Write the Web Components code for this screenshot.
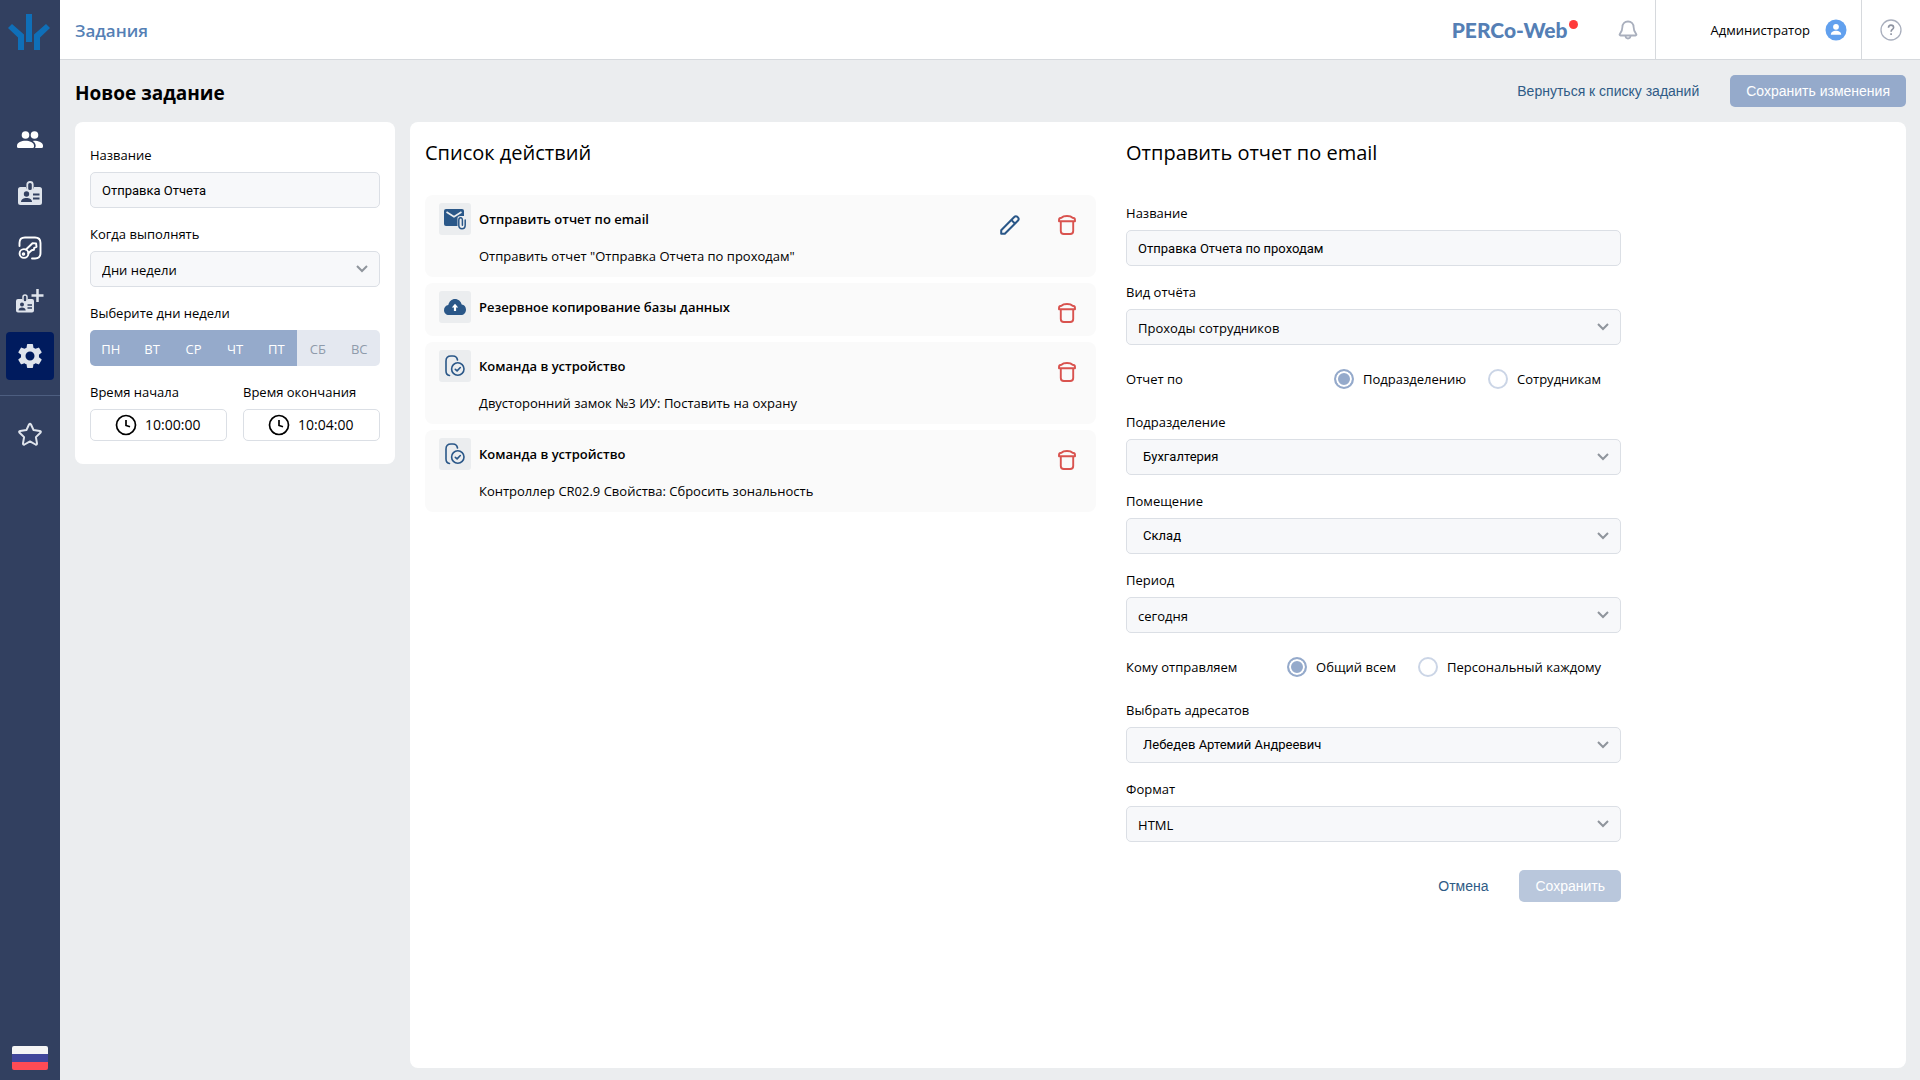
<!DOCTYPE html>
<html lang="ru">
<head>
<meta charset="UTF-8">
<title>Задания</title>
<style>
  html, body { height: 100%; }
  body {
    margin: 0;
    background: #ebedef;
    color: #000;
    font: 13px/20px "Open Sans", "Noto Sans", sans-serif;
  }
</style>
</head>
<body>
<task-app></task-app>

<script>
  const ICONS = {
    // sidebar
    logo: '<svg width="42" height="38" viewBox="0 0 42 38" fill="#0f6fb8"><path d="M18 0h6v28h-6z"/><path d="M0 14l4-4 12 10.500V36h-6V23.500zM42 14l-4-4-12 10.500V36h6V23.500z"/></svg>',
    people: '<svg width="26" height="18" viewBox="0 0 26 18" fill="#fff"><circle cx="8.500" cy="4" r="3.800"/><circle cx="17.500" cy="4" r="3.800"/><path d="M0 14.500C0 11.500 4.500 9.800 8.500 9.800s8.500 1.700 8.500 4.700v1q0 1.500-1.500 1.500h-14Q0 17 0 15.500z"/><path d="M17 9.800c4.500 0 9 1.700 9 4.700v1q0 1.500-1.500 1.500H18q.7-.8.700-2c0-2-.9-4-3-5.100z"/></svg>',
    badge: '<svg width="24" height="26" viewBox="0 0 24 26"><path fill="#dfe4ec" d="M2.500 6H8v1.500h8V6h5.500Q24 6 24 8.500v13q0 2.500-2.500 2.500h-19Q0 24 0 21.500v-13Q0 6 2.500 6z"/><rect x="9.300" y="1" width="5.400" height="9" rx="2.500" fill="#324060" stroke="#dfe4ec" stroke-width="1.800"/><circle cx="8.500" cy="13" r="2.700" fill="#324060"/><path fill="#324060" d="M3 21c0-2.800 2.500-4 5.500-4s5.500 1.200 5.500 4z"/><path d="M15 13.500h6.500M15 17.500h6.500" stroke="#324060" stroke-width="1.800"/></svg>',
    key: '<svg width="24" height="24" viewBox="0 0 24 24" fill="none" stroke="#fff" stroke-width="1.900" stroke-linecap="round" stroke-linejoin="round"><path d="M1.500 10V7Q1.500 1.500 7 1.500h10Q22.500 1.500 22.500 7v10q0 5.500-5.500 5.500h-3"/><circle cx="6" cy="17.500" r="4.400"/><path d="M8 13.500l6.500-6.300 3.600.2.400 3.500-2.300.9-.3 2-2.200.4-3.400 3.100"/><circle cx="5.500" cy="18" r=".8"/></svg>',
    cardPlus: '<svg width="28" height="26" viewBox="0 0 28 26"><path fill="#dfe4ec" d="M2 10h4.500v1h5v-1H16q2 0 2 2v9.500q0 2-2 2H2q-2 0-2-2V12q0-2 2-2z"/><rect x="7" y="6" width="4" height="7" rx="2" fill="#324060" stroke="#dfe4ec" stroke-width="1.500"/><circle cx="6" cy="15.500" r="2" fill="#324060"/><path fill="#324060" d="M2.500 21.500c0-2 1.500-3 3.500-3s3.700 1 3.700 3z"/><path d="M11.500 16h4.500M11.500 19h4.500" stroke="#324060" stroke-width="1.400"/><path d="M21.500 0v13M15.500 6.500h12" stroke="#dfe4ec" stroke-width="2.500"/></svg>',
    gear: '<svg width="30" height="30" viewBox="0 0 24 24" fill="#dfe4ec"><path d="M19.140 12.940c.04-.3.060-.61.060-.94s-.02-.64-.07-.94l2.030-1.580a.49.490 0 0 0 .12-.61l-1.920-3.320a.488.488 0 0 0-.59-.22l-2.390.96c-.5-.38-1.030-.7-1.620-.94l-.36-2.540a.484.484 0 0 0-.48-.41h-3.840c-.24 0-.43.170-.47.410l-.36 2.540c-.59.240-1.130.570-1.620.940l-2.390-.96c-.22-.08-.47 0-.59.220L2.740 8.870c-.12.210-.08.470.12.610l2.030 1.580c-.05.300-.09.630-.09.940s.02.640.070.940l-2.030 1.580a.49.490 0 0 0-.12.610l1.920 3.320c.12.220.370.290.590.220l2.390-.96c.5.380 1.030.700 1.620.940l.36 2.540c.05.240.240.410.480.410h3.840c.24 0 .44-.17.470-.41l.36-2.540c.59-.24 1.130-.56 1.620-.94l2.390.96c.22.080.470 0 .59-.22l1.920-3.320a.49.490 0 0 0-.12-.61zM12 15.600a3.600 3.600 0 1 1 0-7.200 3.600 3.600 0 0 1 0 7.200z"/></svg>',
    star: '<svg width="26" height="26" viewBox="0 0 26 26" fill="none" stroke="#dfe4ec" stroke-width="2" stroke-linejoin="round"><path d="M12 2.500q1-1.500 2 0l2.600 5.600 6.200.8q1.800.5.600 1.900l-4.500 4.300 1.100 6.300q.1 1.700-1.500 1.100L13 19.400l-5.500 3.100q-1.600.6-1.500-1.100l1.100-6.300-4.500-4.300q-1.200-1.400.6-1.900l6.200-.8z"/></svg>',
    flag: '<svg width="36" height="24" viewBox="0 0 36 24"><clipPath id="r"><rect width="36" height="24" rx="2"/></clipPath><g clip-path="url(#r)"><path fill="#f5f5f5" d="M0 0h36v8H0z"/><path fill="#41479b" d="M0 8h36v8H0z"/><path fill="#ff4b55" d="M0 16h36v8H0z"/></g></svg>',
    // header
    bell: '<svg width="20" height="20" viewBox="0 0 20 20" fill="none" stroke="#a9afbd" stroke-width="1.800" stroke-linecap="round" stroke-linejoin="round"><path d="M10 1.500c-3.500 0-5.600 2.500-5.600 5.600 0 4-1.400 5.400-2.600 6.900-.5.700-.2 1.500.7 1.500h15c.9 0 1.200-.8.700-1.500-1.200-1.500-2.600-2.900-2.600-6.900 0-3.100-2.100-5.600-5.600-5.600z"/><path d="M7.500 16c.2 1.700 1.200 2.500 2.500 2.500s2.300-.8 2.500-2.500"/></svg>',
    avatar: '<svg width="22" height="22" viewBox="0 0 22 22"><circle cx="11" cy="11" r="10.500" fill="#61a0ee"/><circle cx="11" cy="7.800" r="2.900" fill="#fff"/><path fill="#fff" d="M5.800 15.800c0-3 2.700-4 5.200-4s5.200 1 5.200 4z"/></svg>',
    help: '<svg width="22" height="22" viewBox="0 0 22 22" fill="none" stroke="#a9afbd" stroke-width="1.300"><circle cx="11" cy="11" r="10"/><path stroke-width="1.600" stroke="#8d93a1" d="M8.500 8.800c0-1.800 1.100-2.700 2.500-2.700s2.600.9 2.600 2.400c0 2-2.500 2-2.500 4.200M11.100 14.300v1.800"/></svg>',
    // actions
    mail: '<svg width="22" height="22" viewBox="0 0 22 22"><path fill="#2a5788" d="M2 1h16q2 0 2 2v13q0 2-2 2H2q-2 0-2-2V3q0-2 2-2z"/><path d="M2.500 4l7.500 4.700L17.500 4" fill="none" stroke="#ebedef" stroke-width="1.700"/><path d="M13.500 19v-9q0-2 3.500-2h5v14h-6q-2.500 0-2.500-3z" fill="#ebedef"/><path d="M21.200 12v5q0 3.800-3.200 3.800T14.800 17v-4.800q0-2.400 1.800-2.400t1.800 2.400v5" fill="none" stroke="#2a5788" stroke-width="1.500" stroke-linecap="round"/></svg>',
    cloud: '<svg width="22" height="16" viewBox="0 0 22 16"><path fill="#2a5788" d="M5 16C2 16 0 13.800 0 11.200 0 8.600 1.800 6.500 4.300 6.100 5 2.500 7.700 0 11 0s6 2.400 6.700 5.600c2.500.200 4.300 2.300 4.300 5.100 0 3-2.200 5.300-5 5.300z"/><path d="M11 4.800l3.200 3.600h-2.100V12H9.900V8.400H7.800z" fill="#fff"/></svg>',
    device: '<svg width="20" height="22" viewBox="0 0 20 22" fill="none" stroke="#2a5788" stroke-width="1.600" stroke-linecap="round"><path d="M4.500 20.500Q1 20 1 16V6q0-5 5-5h2q3.800 0 4.500 4"/><circle cx="12.800" cy="14" r="6.200"/><path d="M10.300 14.300l1.800 1.600 3.200-3.400" stroke-linejoin="round"/></svg>',
    pencil: '<svg width="20" height="20" viewBox="0 0 20 20" fill="none" stroke="#2a5788" stroke-width="2" stroke-linejoin="round"><path d="M1.200 18.800v-3.600L14 2.200q1.900-1.900 3.700-.1 1.900 1.900.1 3.700L4.800 18.800z"/><path d="M11.300 4.900l3.800 3.800"/></svg>',
    trash: '<svg width="18" height="20" viewBox="0 0 18 20" fill="none" stroke="#d9534f" stroke-width="1.900" stroke-linejoin="round"><path d="M1 6.200V5Q1 2.700 3.700 2.700 5 1 9 1t5.300 1.700Q17 2.700 17 5v1.200z"/><path d="M2.800 6.200V16q0 3 3 3h6.400q3 0 3-3V6.200"/></svg>',
    clock: '<svg width="22" height="22" viewBox="0 0 22 22" fill="none" stroke="#000" stroke-width="1.700"><circle cx="11" cy="11" r="9.500"/><path d="M11 6v5.500l4 1.300"/></svg>',
    chevron: '<svg width="12" height="8" viewBox="0 0 12 8" fill="none" stroke="#8f959c" stroke-width="2"><path d="M1 1l5 5 5-5"/></svg>'
  }

  class BaseElement extends HTMLElement {
    constructor() {
      super()
      this.attachShadow({ mode: 'open' })
    }
    connectedCallback() {
      this.shadowRoot.innerHTML = `<style>* { box-sizing: border-box; }${this.constructor.style}</style>${this.render()}`
    }
    attr(name) {
      return this.getAttribute(name) || ''
    }
  }

  class UiIcon extends BaseElement {
    static style = /*css*/`
      :host { display: inline-flex; flex: none; }
      svg { display: block; }
    `
    render() {
      return ICONS[this.attr('name')]
    }
  }

  class SideNav extends BaseElement {
    static style = /*css*/`
      :host {
        display: flex;
        flex-direction: column;
        align-items: center;
        width: 60px;
        background: #324060;
      }
      .logo { display: flex; height: 116px; padding: 14px 2px 0 0; }
      nav { display: flex; flex-direction: column; align-items: center; gap: 6px; align-self: stretch; }
      a {
        display: flex;
        align-items: center;
        justify-content: center;
        width: 48px;
        height: 48px;
        border-radius: 4px;
      }
      a.active { background: #001b5e; }
      hr { width: 100%; margin: 9px 0; border: 0; border-top: 1px solid #4d5e80; }
      button { display: flex; margin-top: auto; padding: 0 0 10px; border: 0; background: none; }
    `
    render() {
      return /*html*/`
        <div class="logo"><ui-icon name="logo"></ui-icon></div>
        <nav>
          <a href="#staff" aria-label="Персонал"><ui-icon name="people"></ui-icon></a>
          <a href="#passes" aria-label="Бюро пропусков"><ui-icon name="badge"></ui-icon></a>
          <a href="#access" aria-label="Контроль доступа"><ui-icon name="key"></ui-icon></a>
          <a href="#visitors" aria-label="Посетители"><ui-icon name="cardPlus"></ui-icon></a>
          <a href="#admin" class="active" aria-label="Администрирование"><ui-icon name="gear"></ui-icon></a>
          <hr>
          <a href="#favorites" aria-label="Избранное"><ui-icon name="star"></ui-icon></a>
        </nav>
        <button type="button" aria-label="Язык"><ui-icon name="flag"></ui-icon></button>
      `
    }
  }

  class TopBar extends BaseElement {
    static style = /*css*/`
      :host {
        display: flex;
        height: 60px;
        padding-left: 15px;
        border-bottom: 1px solid #d6d9dd;
        background: #fff;
      }
      h1 { flex: 1; margin: 0; font-size: 17px; line-height: 62px; font-weight: 600; color: #557fb5; }
      .brand { display: flex; padding-right: 40px; font: 900 21px/60px Lato, sans-serif; color: #557fb5; }
      .dot { width: 9px; height: 9px; margin: 20px 0 0 1px; border-radius: 50%; background: #ff3b3b; }
      button { display: flex; align-items: center; padding: 0; border: 0; background: none; font: inherit; color: inherit; }
      .bell { padding-right: 17px; }
      .user { gap: 15px; padding: 0 14px 0 55px; border-left: 1px solid #d6d9dd; }
      .help { padding: 0 18px; border-left: 1px solid #d6d9dd; }
    `
    render() {
      return /*html*/`
        <h1>Задания</h1>
        <div class="brand">PERCo-Web<span class="dot"></span></div>
        <button class="bell" type="button" aria-label="Уведомления"><ui-icon name="bell"></ui-icon></button>
        <button class="user" type="button">Администратор<ui-icon name="avatar"></ui-icon></button>
        <button class="help" type="button" aria-label="Справка"><ui-icon name="help"></ui-icon></button>
      `
    }
  }

  class UiButton extends BaseElement {
    static style = /*css*/`
      :host { display: inline-block; }
      button {
        height: 32px;
        padding: 0 16px;
        border: 0;
        border-radius: 5px;
        font: 14px/20px "Liberation Sans", Arial, sans-serif;
        color: #fff;
        background: #95aacb;
      }
      button:disabled { background: #b9c7dc; }
      :host([kind="text"]) button { color: #2f5b86; background: none; }
    `
    render() {
      return `<button type="button" ${this.hasAttribute('disabled') ? 'disabled' : ''}><slot></slot></button>`
    }
  }

  const fieldStyle = /*css*/`
    :host { display: block; }
    label { display: block; margin-bottom: 7px; }
  `

  class TextField extends BaseElement {
    static style = /*css*/`
      ${fieldStyle}
      input {
        display: block;
        width: 100%;
        height: 36px;
        padding: 0 11px;
        border: 1px solid #dbdfe5;
        border-radius: 5px;
        background: #f7f8fa;
        font: 13px/20px Roboto, sans-serif;
        color: #000;
      }
    `
    render() {
      return /*html*/`
        <label for="input">${this.attr('label')}</label>
        <input id="input" type="text" value="${this.attr('value')}">
      `
    }
  }

  class SelectField extends BaseElement {
    static style = /*css*/`
      ${fieldStyle}
      .box { display: grid; align-items: center; }
      .box > * { grid-area: 1 / 1; }
      ui-icon { justify-self: end; margin-right: 12px; pointer-events: none; }
      select {
        appearance: none;
        width: 100%;
        height: 36px;
        padding: 2px 30px 0 11px;
        border: 1px solid #dbdfe5;
        border-radius: 5px;
        background: #f7f8fa;
        font: inherit;
        color: #000;
      }
      :host([picker]) select { padding: 0 30px 0 16px; font-family: Roboto, sans-serif; }
    `
    render() {
      return /*html*/`
        <label for="select">${this.attr('label')}</label>
        <div class="box">
          <select id="select"><option>${this.attr('value')}</option></select>
          <ui-icon name="chevron"></ui-icon>
        </div>
      `
    }
  }

  class TimeField extends BaseElement {
    static style = /*css*/`
      ${fieldStyle}
      .box {
        display: flex;
        align-items: center;
        justify-content: center;
        gap: 8px;
        height: 32px;
        border: 1px solid #dbdfe5;
        border-radius: 5px;
        background: #fff;
      }
      input { width: 57px; padding: 0; border: 0; font: inherit; font-size: 14px; color: #000; background: none; }
    `
    render() {
      return /*html*/`
        <label for="time">${this.attr('label')}</label>
        <div class="box">
          <ui-icon name="clock"></ui-icon>
          <input id="time" type="text" value="${this.attr('value')}">
        </div>
      `
    }
  }

  class WeekDays extends BaseElement {
    static style = /*css*/`
      ${fieldStyle}
      #label { margin-bottom: 7px; }
      .days { display: grid; grid-template-columns: repeat(7, 1fr); height: 36px; border-radius: 5px; overflow: hidden; }
      button { padding: 2px 0 0; border: 0; background: #e4e8f0; font: inherit; color: #8f9bab; }
      button[aria-pressed="true"] { background: #95aacb; color: #fff; }
    `
    render() {
      const days = ['ПН', 'ВТ', 'СР', 'ЧТ', 'ПТ', 'СБ', 'ВС']
      const buttons = days.map((day, i) => `<button type="button" aria-pressed="${i < 5}">${day}</button>`)
      return /*html*/`
        <div id="label">Выберите дни недели</div>
        <div class="days" role="group" aria-labelledby="label">${buttons.join('')}</div>
      `
    }
  }

  class RadioRow extends BaseElement {
    static style = /*css*/`
      :host { display: block; }
      .row { display: flex; align-items: center; height: 35px; padding-right: 20px; }
      #label { flex: 1; }
      .options { display: flex; gap: 22px; }
      label { display: flex; align-items: center; gap: 9px; }
      input {
        appearance: none;
        width: 20px;
        height: 20px;
        margin: 0;
        border: 2px solid #cbd5e6;
        border-radius: 50%;
        background: #fff;
      }
      input:checked { border-color: #95aacb; box-shadow: inset 0 0 0 2px #fff; background: #95aacb; }
    `
    render() {
      const options = this.attr('options').split('|').map((option, i) =>
        `<label><input type="radio" name="choice" ${i === 0 ? 'checked' : ''}>${option}</label>`)
      return /*html*/`
        <div class="row" role="radiogroup" aria-labelledby="label">
          <span id="label">${this.attr('label')}</span>
          <div class="options">${options.join('')}</div>
        </div>
      `
    }
  }

  class ActionItem extends BaseElement {
    static style = /*css*/`
      * { box-sizing: border-box; }
      :host {
        display: flex;
        box-sizing: border-box;
        min-height: 53px;
        padding: 8px 20px 5px 14px;
        border-radius: 8px;
        background: #fafafa;
      }
      .badge {
        display: flex;
        align-items: center;
        justify-content: center;
        width: 32px;
        height: 32px;
        border-radius: 3px;
        background: #ebedef;
      }
      .text { flex: 1; padding-left: 8px; line-height: 32px; }
      h3 { margin: 0; font-size: inherit; font-weight: 600; }
      p { margin: 5px 0 0; }
      .tools { display: flex; gap: 38px; padding-top: 12px; height: 32px; }
      button { display: block; padding: 0; border: 0; background: none; }
    `
    render() {
      return /*html*/`
        <div class="badge"><ui-icon name="${this.attr('icon')}"></ui-icon></div>
        <div class="text">
          <h3>${this.attr('heading')}</h3>
          ${this.textContent.trim() ? '<p><slot></slot></p>' : ''}
        </div>
        <div class="tools">
          ${this.hasAttribute('editable') ? '<button type="button" aria-label="Изменить"><ui-icon name="pencil"></ui-icon></button>' : ''}
          <button type="button" aria-label="Удалить"><ui-icon name="trash"></ui-icon></button>
        </div>
      `
    }
  }

  class SchedulePanel extends BaseElement {
    static style = /*css*/`
      :host {
        display: flex;
        flex-direction: column;
        gap: 16px;
        padding: 23px 15px;
        border-radius: 8px;
        background: #fff;
      }
      .times { display: grid; grid-template-columns: 1fr 1fr; gap: 16px; }
    `
    render() {
      return /*html*/`
        <text-field label="Название" value="Отправка Отчета"></text-field>
        <select-field label="Когда выполнять" value="Дни недели"></select-field>
        <week-days></week-days>
        <div class="times">
          <time-field label="Время начала" value="10:00:00"></time-field>
          <time-field label="Время окончания" value="10:04:00"></time-field>
        </div>
      `
    }
  }

  class ActionList extends BaseElement {
    static style = /*css*/`
      :host { display: block; }
      h2 { margin: 0 0 27px; font-size: 20px; line-height: 31px; font-weight: 400; }
      .list { display: grid; gap: 6px; }
    `
    render() {
      return /*html*/`
        <h2>Список действий</h2>
        <div class="list">
          <action-item icon="mail" heading="Отправить отчет по email" editable>Отправить отчет "Отправка Отчета по проходам"</action-item>
          <action-item icon="cloud" heading="Резервное копирование базы данных"></action-item>
          <action-item icon="device" heading="Команда в устройство">Двусторонний замок №3 ИУ: Поставить на охрану</action-item>
          <action-item icon="device" heading="Команда в устройство">Контроллер CR02.9 Свойства: Сбросить зональность</action-item>
        </div>
      `
    }
  }

  class ReportForm extends BaseElement {
    static style = /*css*/`
      :host { display: block; }
      h2 { margin: 0 0 35px; font-size: 20px; line-height: 31px; font-weight: 400; }
      form { display: flex; flex-direction: column; gap: 16px; max-width: 495px; }
      .buttons { display: flex; justify-content: flex-end; gap: 15px; padding-top: 12px; }
    `
    render() {
      return /*html*/`
        <h2>Отправить отчет по email</h2>
        <form>
          <text-field label="Название" value="Отправка Отчета по проходам"></text-field>
          <select-field label="Вид отчёта" value="Проходы сотрудников"></select-field>
          <radio-row label="Отчет по" options="Подразделению|Сотрудникам"></radio-row>
          <select-field label="Подразделение" value="Бухгалтерия" picker></select-field>
          <select-field label="Помещение" value="Склад" picker></select-field>
          <select-field label="Период" value="сегодня"></select-field>
          <radio-row label="Кому отправляем" options="Общий всем|Персональный каждому"></radio-row>
          <select-field label="Выбрать адресатов" value="Лебедев Артемий Андреевич" picker></select-field>
          <select-field label="Формат" value="HTML"></select-field>
          <div class="buttons">
            <ui-button kind="text">Отмена</ui-button>
            <ui-button disabled>Сохранить</ui-button>
          </div>
        </form>
      `
    }
  }

  class TaskApp extends BaseElement {
    static style = /*css*/`
      :host { display: grid; grid-template-columns: 60px 1fr; min-height: 100vh; }
      .page { display: flex; flex-direction: column; }
      .toolbar { display: flex; align-items: center; gap: 15px; height: 62px; padding: 0 14px 0 15px; }
      .toolbar h2 { flex: 1; margin: 0; padding-top: 4px; font-size: 19px; line-height: 30px; font-weight: 700; }
      main {
        flex: 1;
        display: grid;
        grid-template-columns: 320px 1fr;
        gap: 15px;
        padding: 0 14px 12px 15px;
      }
      schedule-panel { align-self: start; }
      .details {
        display: grid;
        grid-template-columns: 7fr 8fr;
        gap: 30px;
        align-items: start;
        padding: 15px 13px 15px 15px;
        border-radius: 8px;
        background: #fff;
      }
    `
    render() {
      return /*html*/`
        <side-nav></side-nav>
        <div class="page">
          <top-bar></top-bar>
          <div class="toolbar">
            <h2>Новое задание</h2>
            <ui-button kind="text">Вернуться к списку заданий</ui-button>
            <ui-button>Сохранить изменения</ui-button>
          </div>
          <main>
            <schedule-panel></schedule-panel>
            <section class="details">
              <action-list></action-list>
              <report-form></report-form>
            </section>
          </main>
        </div>
      `
    }
  }

  customElements.define('ui-icon', UiIcon)
  customElements.define('ui-button', UiButton)
  customElements.define('text-field', TextField)
  customElements.define('select-field', SelectField)
  customElements.define('time-field', TimeField)
  customElements.define('week-days', WeekDays)
  customElements.define('radio-row', RadioRow)
  customElements.define('action-item', ActionItem)
  customElements.define('side-nav', SideNav)
  customElements.define('top-bar', TopBar)
  customElements.define('schedule-panel', SchedulePanel)
  customElements.define('action-list', ActionList)
  customElements.define('report-form', ReportForm)
  customElements.define('task-app', TaskApp)
</script>
</body>
</html>
